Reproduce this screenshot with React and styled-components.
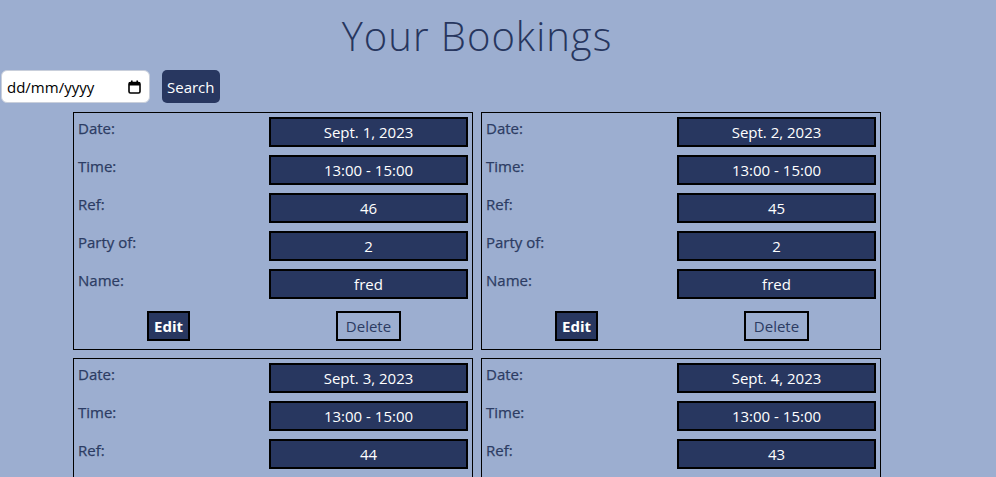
import React from "react";
import styled, { createGlobalStyle } from "styled-components";

const GlobalStyle = createGlobalStyle`
  body {
    margin: 0;
    background-color: #9caed0;
    font-family: "Open Sans", "Noto Sans", sans-serif;
  }
`;

const Page = styled.div`
  width: 954px;
  padding-top: 10px;
`;

const Title = styled.h1`
  margin: 0;
  text-align: center;
  font-family: "Open Sans", sans-serif;
  font-weight: 300;
  font-size: 40px;
  letter-spacing: 1px;
  line-height: 52px;
  color: #27365e;
`;

const SearchBar = styled.form`
  display: flex;
  align-items: center;
  gap: 12px;
  margin: 8px 0 9px 1px;
`;

const DateField = styled.label`
  display: flex;
  align-items: center;
  width: 149px;
  height: 33px;
  box-sizing: border-box;
  padding: 0 8px 0 5px;
  background: #fff;
  border: 1px solid #c9cfdb;
  border-radius: 6px;
`;

const DateInput = styled.input`
  flex: 1;
  min-width: 0;
  border: none;
  outline: none;
  padding: 0;
  font-family: "Open Sans", sans-serif;
  font-size: 15px;
  color: #000;
  &::placeholder {
    color: #000;
  }
`;

const SearchButton = styled.button`
  height: 33px;
  padding: 0 5px;
  border: none;
  border-radius: 5px;
  background: #283760;
  color: #fff;
  font-family: "Open Sans", sans-serif;
  font-size: 15px;
`;

const Grid = styled.div`
  display: grid;
  grid-template-columns: 400px 400px;
  column-gap: 8px;
  row-gap: 8px;
  margin-left: 73px;
`;

const Card = styled.div`
  border: 1px solid #000;
  padding: 4px 4px 8px 4px;
  display: grid;
  grid-template-columns: 181px 199px;
  column-gap: 10px;
  row-gap: 8px;
  & > * {
    min-width: 0;
  }
`;

const Label = styled.div`
  padding-top: 1px;
  font-size: 15px;
  line-height: 20px;
  color: #2c3c63;
  -webkit-text-stroke: 0.25px #2c3c63;
`;

const Value = styled.div`
  height: 30px;
  box-sizing: border-box;
  border: 2px solid #000;
  background: #283760;
  color: #fff;
  font-size: 15px;
  display: flex;
  align-items: center;
  justify-content: center;
`;

const Actions = styled.div`
  display: flex;
  justify-content: center;
  margin-top: 4px;
`;

const ActionButton = styled.button`
  height: 30px;
  box-sizing: border-box;
  border: 2px solid #000;
  border-radius: 0;
  padding: 0 ${(p) => (p.$primary ? "5px" : "8px")};
  background: ${(p) => (p.$primary ? "#283760" : "transparent")};
  color: ${(p) => (p.$primary ? "#fff" : "#2c3c63")};
  font-family: "Open Sans", sans-serif;
  font-weight: ${(p) => (p.$primary ? 700 : 400)};
  font-size: 15px;
`;

function CalendarIcon() {
  return (
    <svg width="13" height="14" viewBox="0 0 13 14">
      <rect x="1" y="2.5" width="11" height="10.5" rx="1.5" fill="none" stroke="#000" strokeWidth="1.6" />
      <rect x="1" y="2.5" width="11" height="3" fill="#000" />
      <rect x="3" y="0.5" width="1.6" height="3" fill="#000" />
      <rect x="8.4" y="0.5" width="1.6" height="3" fill="#000" />
    </svg>
  );
}

const bookings = [
  { date: "Sept. 1, 2023", time: "13:00 - 15:00", ref: 46, party: 2, name: "fred" },
  { date: "Sept. 2, 2023", time: "13:00 - 15:00", ref: 45, party: 2, name: "fred" },
  { date: "Sept. 3, 2023", time: "13:00 - 15:00", ref: 44, party: 2, name: "fred" },
  { date: "Sept. 4, 2023", time: "13:00 - 15:00", ref: 43, party: 2, name: "fred" },
];

function BookingCard({ b }) {
  const rows = [
    ["Date:", b.date],
    ["Time:", b.time],
    ["Ref:", b.ref],
    ["Party of:", b.party],
    ["Name:", b.name],
  ];
  return (
    <Card>
      {rows.map(([label, value]) => (
        <React.Fragment key={label}>
          <Label>{label}</Label>
          <Value>{value}</Value>
        </React.Fragment>
      ))}
      <Actions>
        <ActionButton $primary>Edit</ActionButton>
      </Actions>
      <Actions>
        <ActionButton>Delete</ActionButton>
      </Actions>
    </Card>
  );
}

export default function App() {
  return (
    <>
      <GlobalStyle />
      <Page>
        <Title>Your Bookings</Title>
        <SearchBar onSubmit={(e) => e.preventDefault()}>
          <DateField>
            <DateInput type="text" placeholder="dd/mm/yyyy" />
            <CalendarIcon />
          </DateField>
          <SearchButton type="submit">Search</SearchButton>
        </SearchBar>
        <Grid>
          {bookings.map((b) => (
            <BookingCard key={b.ref} b={b} />
          ))}
        </Grid>
      </Page>
    </>
  );
}
